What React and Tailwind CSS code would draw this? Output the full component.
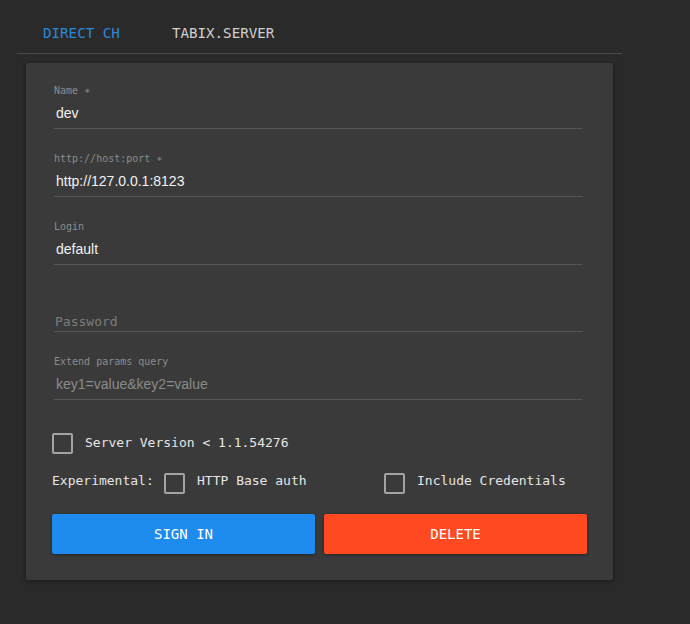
import React from "react";

const mono = { fontFamily: '"DejaVu Sans Mono", "Liberation Mono", monospace' };
const sans = { fontFamily: '"Liberation Sans", Arial, sans-serif' };

function Field({ label, value, placeholder, first }) {
  return (
    <div className={`${first ? "" : "mt-[23px]"} border-b border-[#555555] pb-[5px]`}>
      <div className="h-[14px] text-[10px] leading-[14px] text-[#8c8c8c]" style={mono}>
        {label}
      </div>
      <div
        className={`mt-[5px] h-[20px] text-[14px] leading-[20px] pl-[2px] ${value ? "text-[#f2f2f2]" : "text-[#8a8a8a]"}`}
        style={sans}
      >
        {value || placeholder}
      </div>
    </div>
  );
}

function Box() {
  return <div className="w-[21px] h-[21px] shrink-0 rounded-[2px] border-2 border-[#a3a3a3]" />;
}

export default function App() {
  return (
    <div className="min-h-[624px] w-full bg-[#2a2a2a]" style={mono}>
      <div className="pl-[17px] w-[622px] pt-[24px]">
        <div className="flex border-b border-[#4a4a4a] pb-[11px]">
          <div className="px-[26px] text-[14.2px] leading-[18px] text-[#2a88da]">DIRECT CH</div>
          <div className="px-[26px] text-[14.2px] leading-[18px] text-[#cfcfcf]">TABIX.SERVER</div>
        </div>
        <div className="mx-[9px] mt-[9px] rounded-[2px] bg-[#3a3a3a] shadow-[0_1px_4px_rgba(0,0,0,0.45)] pt-[21px] pb-[26px] pl-[26px] pr-[26px]">
          <div className="pl-[2px] pr-[4px]">
            <Field first label="Name ∗" value="dev" />
            <Field label="http://host:port ∗" value="http://127.0.0.1:8123" />
            <Field label="Login" value="default" />
            <div className="mt-[23px] h-[44px] border-b border-[#555555] flex items-end pb-[1px]">
              <div className="text-[13px] leading-[16px] text-[#7c7c7c] pl-[1px]" style={mono}>
                Password
              </div>
            </div>
            <Field label="Extend params query" placeholder="key1=value&key2=value" />
          </div>

          <div className="mt-[33px] flex items-center">
            <Box />
            <div className="ml-[12px] mb-[2px] text-[13px] leading-[16px] text-[#e6e6e6]">
              Server Version &lt; 1.1.54276
            </div>
          </div>

          <div className="mt-[19px] flex items-center">
            <div className="mb-[5px] w-[112px] text-[13px] leading-[16px] text-[#e6e6e6]">Experimental:</div>
            <div className="flex items-center w-[220px]">
              <Box />
              <div className="ml-[12px] mb-[5px] text-[13px] leading-[16px] text-[#e6e6e6]">HTTP Base auth</div>
            </div>
            <div className="flex items-center">
              <Box />
              <div className="ml-[12px] mb-[5px] text-[13px] leading-[16px] text-[#e6e6e6]">Include Credentials</div>
            </div>
          </div>

          <div className="mt-[20px] flex gap-[9px]">
            <button className="flex-1 h-[40px] rounded-[2px] bg-[#1e8bef] text-white text-[14px] shadow-[0_1px_3px_rgba(0,0,0,0.4)]" style={mono}>
              SIGN IN
            </button>
            <button className="flex-1 h-[40px] rounded-[2px] bg-[#ff4a21] text-white text-[14px] shadow-[0_1px_3px_rgba(0,0,0,0.4)]" style={mono}>
              DELETE
            </button>
          </div>
        </div>
      </div>
    </div>
  );
}
